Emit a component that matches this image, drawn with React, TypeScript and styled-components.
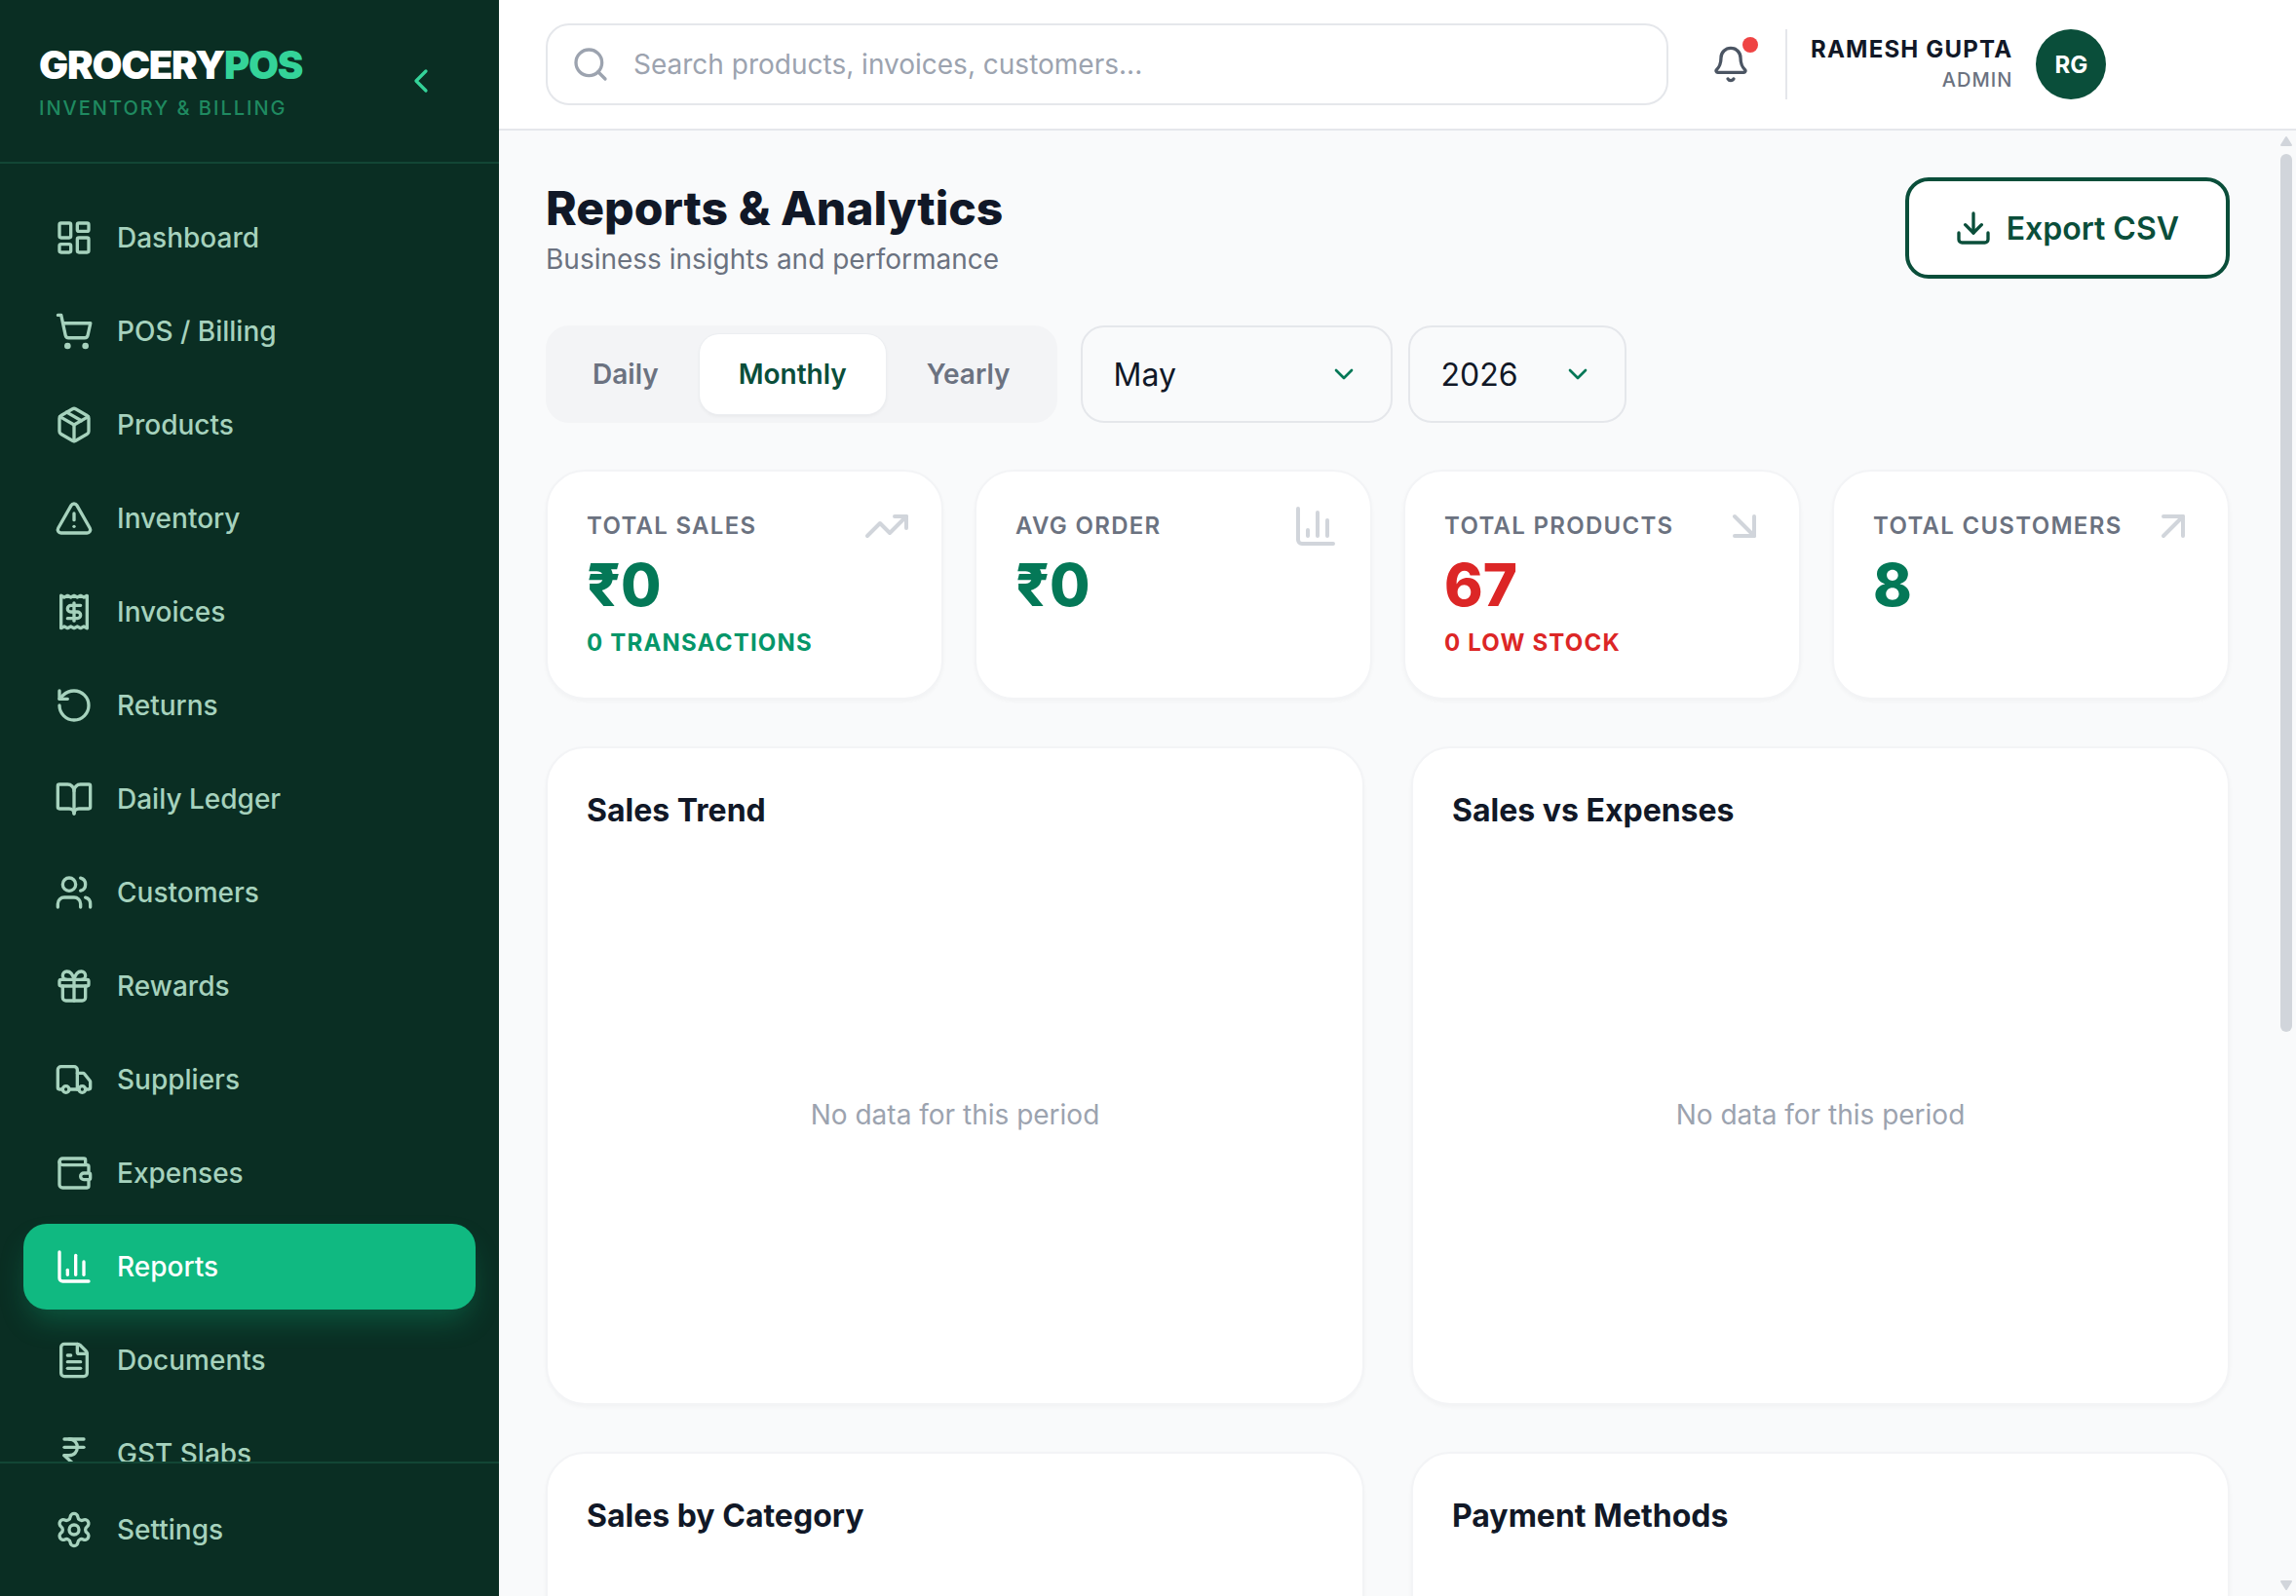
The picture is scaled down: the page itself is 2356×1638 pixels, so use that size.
import React from 'react'
import styled, { createGlobalStyle } from 'styled-components'
import {
  LayoutDashboard,
  ShoppingCart,
  Package,
  TriangleAlert,
  Receipt,
  RotateCcw,
  BookOpen,
  Users,
  Gift,
  Truck,
  Wallet,
  ChartColumn,
  FileText,
  IndianRupee,
  Settings,
  ChevronLeft,
  ChevronDown,
  Search,
  Bell,
  Download,
  TrendingUp,
  ArrowDownRight,
  ArrowUpRight,
} from 'lucide-react'

const GlobalStyle = createGlobalStyle`
  * {
    box-sizing: border-box;
  }
  html,
  body {
    margin: 0;
    height: 100%;
    font-family: 'Inter', 'Noto Sans', sans-serif;
    color: #111827;
  }
`

const Shell = styled.div`
  display: flex;
  height: 100vh;
  overflow: hidden;
  background: #f9fafb;
`

const Sidebar = styled.aside`
  width: 512px;
  flex-shrink: 0;
  display: flex;
  flex-direction: column;
  background: #0a2e23;
`

const Brand = styled.div`
  height: 168px;
  flex-shrink: 0;
  padding: 2px 60px 0 40px;
  display: flex;
  align-items: center;
  justify-content: space-between;
  border-bottom: 2px solid #124635;
  color: #34d399;

  svg {
    margin-top: -2px;
  }
`

const BrandName = styled.div`
  font-size: 40px;
  line-height: 48px;
  font-weight: 900;
  letter-spacing: -1.25px;
  color: #ffffff;

  span {
    color: #34d399;
  }
`

const BrandTag = styled.div`
  margin-top: 6px;
  font-size: 20px;
  line-height: 28px;
  font-weight: 500;
  letter-spacing: 2px;
  color: #1f8a60;
`

const Nav = styled.nav`
  flex: 1;
  min-height: 0;
  overflow: hidden;
  padding: 32px 24px 0;
  display: flex;
  flex-direction: column;
  gap: 8px;
`

const NavItem = styled.a<{ $active?: boolean }>`
  height: 88px;
  flex-shrink: 0;
  padding: 0 32px;
  display: flex;
  align-items: center;
  gap: 24px;
  border-radius: 24px;
  font-size: 28px;
  font-weight: 500;
  color: ${(p) => (p.$active ? '#ffffff' : '#a6d2bd')};
  background: ${(p) => (p.$active ? '#10b981' : 'transparent')};
  box-shadow: ${(p) => (p.$active ? '0 16px 30px -6px rgba(16, 185, 129, 0.3)' : 'none')};
`

const SidebarFoot = styled.div`
  flex-shrink: 0;
  padding: 24px;
  border-top: 2px solid #124635;
`

const Column = styled.div`
  flex: 1;
  min-width: 0;
  display: flex;
  flex-direction: column;
`

const Header = styled.header`
  height: 134px;
  flex-shrink: 0;
  padding: 0 48px;
  display: flex;
  align-items: center;
  background: #ffffff;
  border-bottom: 2px solid #e5e7eb;
`

const SearchBox = styled.div`
  width: 1152px;
  height: 84px;
  padding: 0 24px;
  display: flex;
  align-items: center;
  gap: 24px;
  border: 2px solid #e5e7eb;
  border-radius: 24px;
  background: #ffffff;
  color: #9ca3af;
  font-size: 28px;
`

const BellWrap = styled.div`
  position: relative;
  width: 40px;
  height: 40px;
  margin: 0 36px 0 44px;
  color: #4b5563;
`

const BellDot = styled.span`
  position: absolute;
  top: -8px;
  right: -8px;
  width: 16px;
  height: 16px;
  border-radius: 50%;
  background: #ef4444;
`

const Divider = styled.div`
  width: 2px;
  height: 72px;
  background: #e5e7eb;
`

const UserInfo = styled.div`
  margin-left: 24px;
  text-align: right;
`

const UserName = styled.div`
  font-size: 24px;
  line-height: 32px;
  font-weight: 700;
  letter-spacing: 1.2px;
`

const UserRole = styled.div`
  font-size: 20px;
  line-height: 30px;
  font-weight: 500;
  letter-spacing: 1px;
  color: #6b7280;
`

const Avatar = styled.div`
  width: 72px;
  height: 72px;
  margin-left: 24px;
  display: flex;
  align-items: center;
  justify-content: center;
  border-radius: 50%;
  background: #0a4e3a;
  color: #ffffff;
  font-size: 24px;
  font-weight: 700;
`

const Body = styled.div`
  flex: 1;
  min-height: 0;
  display: flex;
`

const Content = styled.main`
  flex: 1;
  min-width: 0;
  overflow: hidden;
  padding: 48px;
`

const ScrollRail = styled.div`
  width: 20px;
  flex-shrink: 0;
  display: flex;
  flex-direction: column;
  justify-content: space-between;
  color: #d1d5db;
`

const ScrollArrow = styled.svg`
  display: block;
  width: 20px;
  height: 20px;
`

const ScrollTrack = styled.div`
  flex: 1;
  padding: 4px;
`

const ScrollThumb = styled.div`
  height: 901px;
  border-radius: 6px;
  background: #d1d5db;
`

const TitleRow = styled.div`
  display: flex;
  align-items: flex-start;
  justify-content: space-between;
`

const PageTitle = styled.h1`
  margin: 0;
  font-size: 48px;
  line-height: 64px;
  font-weight: 800;
  color: #111827;
`

const PageSub = styled.p`
  margin: 0;
  font-size: 28px;
  line-height: 40px;
  color: #6b7280;
`

const ExportButton = styled.button`
  height: 104px;
  padding: 0 48px 0 46px;
  display: flex;
  align-items: center;
  gap: 14px;
  border: 4px solid #0a4e3a;
  border-radius: 24px;
  background: #ffffff;
  color: #0a4e3a;
  font-family: inherit;
  font-size: 32px;
  font-weight: 600;
`

const FilterRow = styled.div`
  margin-top: 48px;
  display: flex;
  align-items: center;
  gap: 16px;
`

const Tabs = styled.div`
  height: 100px;
  padding: 9px 8px;
  margin-right: 8px;
  display: flex;
  gap: 2px;
  border-radius: 24px;
  background: #f3f4f6;
`

const Tab = styled.button<{ $active?: boolean }>`
  padding: 0 40px;
  border: none;
  border-radius: 20px;
  font-family: inherit;
  font-size: 28px;
  font-weight: 600;
  color: ${(p) => (p.$active ? '#0a4e3a' : '#6b7280')};
  background: ${(p) => (p.$active ? '#ffffff' : 'transparent')};
  box-shadow: ${(p) => (p.$active ? '0 0 0 1px #eceef1, 0 2px 4px rgba(0, 0, 0, 0.06)' : 'none')};
`

const Select = styled.div<{ $width: number }>`
  width: ${(p) => p.$width}px;
  height: 100px;
  padding: 0 32px;
  display: flex;
  align-items: center;
  justify-content: space-between;
  border: 2px solid #e5e7eb;
  border-radius: 24px;
  font-size: 32px;
  color: #111827;

  svg {
    color: #047857;
  }
`

const StatGrid = styled.div`
  margin-top: 48px;
  display: grid;
  grid-template-columns: repeat(4, 1fr);
  gap: 32px;
`

const StatCard = styled.div`
  position: relative;
  height: 236px;
  padding: 40px;
  border: 2px solid #f3f4f6;
  border-radius: 40px;
  background: #ffffff;
  box-shadow: 0 2px 4px rgba(0, 0, 0, 0.03);
`

const StatIcon = styled.span`
  position: absolute;
  top: 32px;
  right: 32px;
  display: flex;
  color: #d1d5db;
`

const StatLabel = styled.div`
  font-size: 24px;
  line-height: 32px;
  font-weight: 600;
  letter-spacing: 1.3px;
  color: #6b7280;
`

const StatValue = styled.div<{ $color: string }>`
  margin-top: 8px;
  font-size: 60px;
  line-height: 72px;
  font-weight: 800;
  color: ${(p) => p.$color};
`

const StatNote = styled.div<{ $color: string }>`
  margin-top: 8px;
  font-size: 24px;
  line-height: 32px;
  font-weight: 700;
  letter-spacing: 1.2px;
  color: ${(p) => p.$color};
`

const ChartGrid = styled.div`
  margin-top: 48px;
  display: grid;
  grid-template-columns: repeat(2, 1fr);
  gap: 48px;
`

const ChartCard = styled.section`
  padding: 40px;
  border: 2px solid #f3f4f6;
  border-radius: 40px;
  background: #ffffff;
  box-shadow: 0 2px 4px rgba(0, 0, 0, 0.03);
`

const ChartTitle = styled.h2`
  margin: 0 0 32px;
  font-size: 32px;
  line-height: 48px;
  font-weight: 700;
  color: #111827;
`

const ChartEmpty = styled.div`
  height: 512px;
  display: flex;
  align-items: center;
  justify-content: center;
  font-size: 28px;
  color: #9ca3af;
`

const navItems = [
  { label: 'Dashboard', icon: LayoutDashboard },
  { label: 'POS / Billing', icon: ShoppingCart },
  { label: 'Products', icon: Package },
  { label: 'Inventory', icon: TriangleAlert },
  { label: 'Invoices', icon: Receipt },
  { label: 'Returns', icon: RotateCcw },
  { label: 'Daily Ledger', icon: BookOpen },
  { label: 'Customers', icon: Users },
  { label: 'Rewards', icon: Gift },
  { label: 'Suppliers', icon: Truck },
  { label: 'Expenses', icon: Wallet },
  { label: 'Reports', icon: ChartColumn, active: true },
  { label: 'Documents', icon: FileText },
  { label: 'GST Slabs', icon: IndianRupee },
]

const GREEN = '#047857'
const RED = '#dc2626'

const stats = [
  { label: 'Total Sales', value: '₹0', color: GREEN, note: '0 Transactions', noteColor: '#059669', icon: TrendingUp },
  { label: 'Avg Order', value: '₹0', color: GREEN, icon: ChartColumn },
  { label: 'Total Products', value: '67', color: RED, note: '0 Low Stock', noteColor: RED, icon: ArrowDownRight },
  { label: 'Total Customers', value: '8', color: GREEN, icon: ArrowUpRight },
]

const charts = ['Sales Trend', 'Sales vs Expenses', 'Sales by Category', 'Payment Methods']

const App = () => {
  return (
    <Shell>
      <GlobalStyle />
      <Sidebar>
        <Brand>
          <div>
            <BrandName>
              GROCERY<span>POS</span>
            </BrandName>
            <BrandTag>INVENTORY &amp; BILLING</BrandTag>
          </div>
          <ChevronLeft size={40} />
        </Brand>
        <Nav>
          {navItems.map(({ label, icon: Icon, active }) => (
            <NavItem key={label} $active={active}>
              <Icon size={40} />
              {label}
            </NavItem>
          ))}
        </Nav>
        <SidebarFoot>
          <NavItem>
            <Settings size={40} />
            Settings
          </NavItem>
        </SidebarFoot>
      </Sidebar>

      <Column>
        <Header>
          <SearchBox>
            <Search size={40} />
            Search products, invoices, customers...
          </SearchBox>
          <BellWrap>
            <Bell size={40} />
            <BellDot />
          </BellWrap>
          <Divider />
          <UserInfo>
            <UserName>RAMESH GUPTA</UserName>
            <UserRole>ADMIN</UserRole>
          </UserInfo>
          <Avatar>RG</Avatar>
        </Header>

        <Body>
          <Content>
            <TitleRow>
              <div>
                <PageTitle>Reports &amp; Analytics</PageTitle>
                <PageSub>Business insights and performance</PageSub>
              </div>
              <ExportButton>
                <Download size={40} />
                Export CSV
              </ExportButton>
            </TitleRow>

            <FilterRow>
              <Tabs>
                <Tab>Daily</Tab>
                <Tab $active>Monthly</Tab>
                <Tab>Yearly</Tab>
              </Tabs>
              <Select $width={320}>
                May
                <ChevronDown size={32} />
              </Select>
              <Select $width={224}>
                2026
                <ChevronDown size={32} />
              </Select>
            </FilterRow>

            <StatGrid>
              {stats.map(({ label, value, color, note, noteColor, icon: Icon }) => (
                <StatCard key={label}>
                  <StatIcon>
                    <Icon size={48} />
                  </StatIcon>
                  <StatLabel>{label.toUpperCase()}</StatLabel>
                  <StatValue $color={color}>{value}</StatValue>
                  {note && <StatNote $color={noteColor}>{note.toUpperCase()}</StatNote>}
                </StatCard>
              ))}
            </StatGrid>

            <ChartGrid>
              {charts.map((title) => (
                <ChartCard key={title}>
                  <ChartTitle>{title}</ChartTitle>
                  <ChartEmpty>No data for this period</ChartEmpty>
                </ChartCard>
              ))}
            </ChartGrid>
          </Content>

          {/* the page's scrollbar, drawn because the browser hides its own */}
          <ScrollRail>
            <ScrollArrow viewBox="0 0 20 20">
              <polygon points="10,7 5,15 15,15" fill="currentColor" stroke="currentColor" strokeWidth="2" strokeLinejoin="round" />
            </ScrollArrow>
            <ScrollTrack>
              <ScrollThumb />
            </ScrollTrack>
            <ScrollArrow viewBox="0 0 20 20">
              <polygon points="5,5 15,5 10,13" fill="currentColor" stroke="currentColor" strokeWidth="2" strokeLinejoin="round" />
            </ScrollArrow>
          </ScrollRail>
        </Body>
      </Column>
    </Shell>
  )
}

export default App
